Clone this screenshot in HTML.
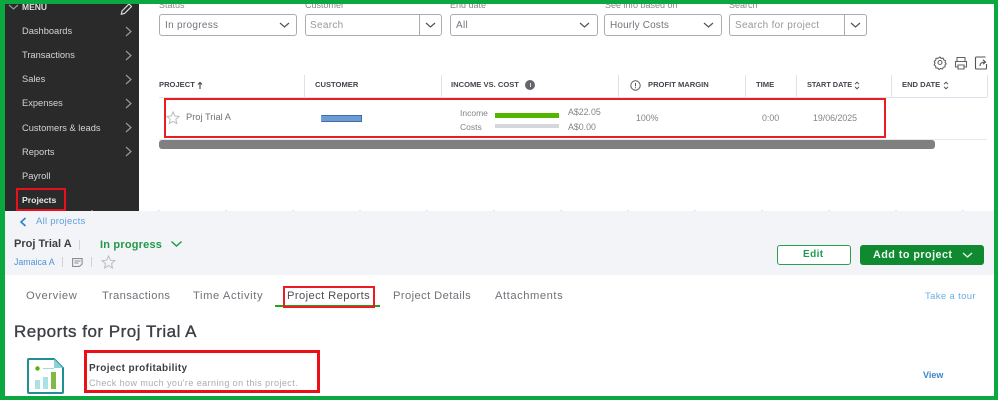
<!DOCTYPE html>
<html><head><meta charset="utf-8"><style>
html,body{margin:0;padding:0;background:#fff}
#p{position:relative;width:998px;height:400px;overflow:hidden;background:#fff;font-family:"Liberation Sans",sans-serif}
.b{position:absolute}
.t{position:absolute;white-space:nowrap;line-height:12px;filter:blur(.35px)}
.n{font-size:9.3px;color:#d4d4d4;left:22px}
.h{font-size:7.6px;font-weight:bold;color:#42464d}
.s{position:absolute;top:14px;height:20px;border:1px solid #a9acb0;border-radius:3px;background:#fff;box-sizing:content-box}
.f{font-size:10px;color:#72757b;top:20px;letter-spacing:.3px}
.l{font-size:9px;color:#85888c;top:-1px}
.tab{font-size:11.200px;color:#6f7277;top:290px;letter-spacing:.4px}
.sep{position:absolute;top:75px;width:1px;height:22px;background:#dde3ec}
svg{position:absolute;overflow:visible}
</style></head><body><div id="p">

<!-- sidebar -->
<div class="b" style="left:5px;top:4px;width:134px;height:207px;background:#2a2a2a"></div>
<svg style="left:0;top:0" width="140" height="211" fill="none" stroke="#9a9a9a" stroke-width="1.2">
<path d="M9 5l4.500 4 4.500-4"/>
<path d="M126 27l5 4.500-5 4.500M126 51l5 4.500-5 4.500M126 75l5 4.500-5 4.500M126 99l5 4.500-5 4.500M126 123l5 4.500-5 4.500M126 147l5 4.500-5 4.500"/>
<path d="M122 11l7-7 2.500 2.500-7 7-3.200.7z" stroke="#ddd"/>
</svg>
<div class="t" style="left:22px;top:1px;font-size:8.500px;font-weight:bold;color:#ddd">MENU</div>
<div class="t n" style="top:25px">Dashboards</div>
<div class="t n" style="top:49px">Transactions</div>
<div class="t n" style="top:73px">Sales</div>
<div class="t n" style="top:97px">Expenses</div>
<div class="t n" style="top:122px">Customers &amp; leads</div>
<div class="t n" style="top:146px">Reports</div>
<div class="t n" style="top:170px">Payroll</div>
<div class="t n" style="top:194px;font-size:8.700px;font-weight:bold;color:#e8e8e8">Projects</div>
<div class="b" style="left:16px;top:188px;width:50px;height:23px;box-sizing:border-box;border:2px solid #e8101c"></div>

<!-- filters -->
<div class="t l" style="left:159px">Status</div>
<div class="t l" style="left:305px">Customer</div>
<div class="t l" style="left:450px">End date</div>
<div class="t l" style="left:605px">See info based on</div>
<div class="t l" style="left:729px">Search</div>

<div class="s" style="left:159px;width:136px"></div>
<div class="s" style="left:305px;width:135px"></div>
<div class="b" style="left:419px;top:15px;width:1px;height:20px;background:#a9acb0"></div>
<div class="s" style="left:450px;width:146px"></div>
<div class="s" style="left:604px;width:116px"></div>
<div class="s" style="left:729px;width:136px"></div>
<div class="b" style="left:844px;top:15px;width:1px;height:20px;background:#a9acb0"></div>
<div class="t f" style="left:165px">In progress</div>
<div class="t f" style="left:310px;color:#96999d">Search</div>
<div class="t f" style="left:456px">All</div>
<div class="t f" style="left:610px;letter-spacing:.15px">Hourly Costs</div>
<div class="t f" style="left:735px;color:#96999d">Search for project</div>
<svg style="left:0;top:0" width="998" height="40" fill="none" stroke="#4f5358" stroke-width="1.2">
<path d="M280 23l4.500 4 4.500-4M426 23l4.500 4 4.500-4M580 23l4.500 4 4.500-4M704 23l4.500 4 4.500-4M851 23l4.500 4 4.500-4"/>
</svg>

<!-- toolbar icons -->
<svg style="left:933px;top:56px" width="56" height="14" fill="none" stroke="#5f6368" stroke-width="1.1">
<circle cx="7" cy="6.500" r="2"/>
<path d="M7 1l1.200 1.500 1.900-.4.600 1.800 1.800.7-.4 1.900 1.100 1.200-1.300 1.400.2 1.800-1.800.5-.9 1.600-1.800-.5-1.500 1-1.300-1.400-1.900-.1-.3-1.900L1.200 8.800 2 7 1.200 5.300l1.500-1.100.3-1.900 1.900 0z" stroke-linejoin="round"/>
<path d="M24 5V1.500h8V5M25 11h-2.500V5.500h11V11h-2.500M25 9h6v4h-6z"/>
<path d="M52.500 1h-9a1 1 0 0 0-1 1v10a1 1 0 0 0 1 1h9a1 1 0 0 0 1-1v-4M47 10c0-2.500 2-4 5-4M50 3.800l2.500 2.200-2.500 2.200" stroke="#4f5358"/>
</svg>

<!-- table header -->
<div class="sep" style="left:304px"></div>
<div class="sep" style="left:441px"></div>
<div class="sep" style="left:618px"></div>
<div class="sep" style="left:745px"></div>
<div class="sep" style="left:796px"></div>
<div class="sep" style="left:891px"></div>
<div class="sep" style="left:987px"></div>
<div class="b" style="left:159px;top:97px;width:828px;height:1px;background:#dde3ec"></div>
<div class="t h" style="left:159px;top:79px">PROJECT</div>
<svg style="left:196px;top:81px" width="8" height="9" fill="none" stroke="#4a4e55" stroke-width="1.200"><path d="M4 8V1.500M2 3.500l2-2 2 2"/></svg>
<div class="t h" style="left:315px;top:79px">CUSTOMER</div>
<div class="t h" style="left:451px;top:79px">INCOME VS. COST</div>
<div class="b" style="left:525px;top:80px;width:10px;height:10px;border-radius:50%;background:#63666b"></div>
<div class="b" style="left:529.500px;top:83px;width:1px;height:4px;background:#ddd"></div>
<svg style="left:630px;top:80px" width="11" height="11" fill="none" stroke="#55585d" stroke-width="1"><circle cx="5.500" cy="5.500" r="4.700"/><path d="M5.500 3v3.200M5.500 7.300v1"/></svg>
<div class="t h" style="left:648px;top:79px">PROFIT MARGIN</div>
<div class="t h" style="left:756px;top:79px">TIME</div>
<div class="t h" style="left:807px;top:79px;font-size:7.300px">START DATE</div>
<div class="t h" style="left:902px;top:79px">END DATE</div>
<svg style="left:855px;top:81px" width="100" height="9" fill="none" stroke="#4a4e55" stroke-width="1"><path d="M0 3.200l2-2 2 2M0 5.800l2 2 2-2M89 3.200l2-2 2 2M89 5.800l2 2 2-2"/></svg>

<!-- row -->
<div class="b" style="left:159px;top:139px;width:828px;height:1px;background:#e6e8ec"></div>
<svg style="left:166px;top:111px" width="14" height="14" fill="#fff" stroke="#b9bcc0" stroke-width="1"><path d="M7 1l1.800 4 4.300.4-3.300 2.900 1 4.300L7 10.300 3.200 12.600l1-4.300L.9 5.400l4.300-.4z"/></svg>
<div class="t" style="left:186px;top:111px;font-size:9.300px;color:#6f7276">Proj Trial A</div>
<div class="b" style="left:321px;top:115px;width:41px;height:7px;box-sizing:border-box;background:#6d9bd3;border:1px solid #3f6ea6;border-left-color:#7aa3d8"></div>
<div class="t" style="left:460px;top:106.500px;font-size:8.500px;color:#808388">Income</div>
<div class="t" style="left:460px;top:121px;font-size:8.500px;color:#808388">Costs</div>
<div class="b" style="left:495px;top:113px;width:64px;height:5px;background:#53b700"></div>
<div class="b" style="left:495px;top:124px;width:64px;height:4px;background:#d4d7dc"></div>
<div class="t" style="left:568px;top:106px;font-size:8.800px;color:#808388">A$22.05</div>
<div class="t" style="left:568px;top:120.500px;font-size:8.800px;color:#808388">A$0.00</div>
<div class="t" style="left:636px;top:112px;font-size:8.800px;color:#808388">100%</div>
<div class="t" style="left:762px;top:112px;font-size:8.800px;color:#808388">0:00</div>
<div class="t" style="left:813px;top:112px;font-size:8.800px;color:#808388">19/06/2025</div>
<div class="b" style="left:164px;top:98px;width:722px;height:40px;box-sizing:border-box;border:2px solid #ec1c24"></div>
<div class="b" style="left:159px;top:140px;width:776px;height:9px;background:#808080;border-radius:3px"></div>

<!-- tick marks -->
<svg style="left:0;top:210px" width="998" height="2" stroke="#c9ccd1" stroke-width="1"><path d="M92 0v1M159 0v1M226 0v1M293 0v1M360 0v1M427 0v1M494 0v1M561 0v1M628 0v1M695 0v1M762 0v1M829 0v1M896 0v1M963 0v1"/></svg>

<!-- project header -->
<div class="b" style="left:5px;top:211px;width:989px;height:64px;background:#f3f4f7"></div>
<svg style="left:19px;top:217px" width="9" height="10" fill="none" stroke="#2b7fd0" stroke-width="1.600"><path d="M6.500 1L2 5l4.500 4"/></svg>
<div class="t" style="left:36px;top:216px;font-size:9.500px;color:#5f9fdc;letter-spacing:.25px">All projects</div>
<div class="t" style="left:14px;top:238px;font-size:11px;font-weight:bold;color:#3a3d42">Proj Trial A</div>
<div class="b" style="left:79px;top:240px;width:1px;height:10px;background:#cfd2d6"></div>
<div class="t" style="left:100px;top:239px;font-size:11px;font-weight:bold;color:#1f9a45;letter-spacing:.2px">In progress</div>
<svg style="left:170px;top:240px" width="13" height="8" fill="none" stroke="#1f9a45" stroke-width="1.400"><path d="M1.500 1.500L6.500 6l5-4.500"/></svg>
<div class="t" style="left:14px;top:256px;font-size:8.800px;color:#4c93d6">Jamaica A</div>
<div class="b" style="left:62px;top:257px;width:1px;height:10px;background:#cfd2d6"></div>
<div class="b" style="left:91px;top:257px;width:1px;height:10px;background:#cfd2d6"></div>
<svg style="left:72px;top:258px" width="11" height="9" fill="none" stroke="#8b8e93" stroke-width="1.100"><path d="M.6.600h9.500v5.500L7.500 8.400H.6zM2.500 3h6M2.500 5h4"/></svg>
<svg style="left:101px;top:255px" width="15" height="14" fill="none" stroke="#b9bcc0" stroke-width="1"><path d="M7.500 1l1.900 4.200 4.500.4-3.400 3 1 4.400-4-2.400-4 2.400 1-4.400-3.400-3 4.500-.4z"/></svg>
<div class="b" style="left:777px;top:245px;width:74px;height:20px;box-sizing:border-box;border:1.500px solid #2c9c50;border-radius:3px;background:#fff"></div>
<div class="t" style="left:803px;top:249px;font-size:10px;font-weight:bold;color:#1f9a50;letter-spacing:.4px">Edit</div>
<div class="b" style="left:860px;top:245px;width:124px;height:20px;background:#0f8a30;border-radius:3px"></div>
<div class="t" style="left:873px;top:249px;font-size:10.800px;font-weight:bold;color:#eef7f0;letter-spacing:.45px">Add to project</div>
<svg style="left:962px;top:252px" width="11" height="7" fill="none" stroke="#eef7f0" stroke-width="1.300"><path d="M1 1l4.500 4L10 1"/></svg>

<!-- tabs -->
<div class="t tab" style="left:26px;letter-spacing:.6px">Overview</div>
<div class="t tab" style="left:102px">Transactions</div>
<div class="t tab" style="left:193px;letter-spacing:.6px">Time Activity</div>
<div class="t tab" style="left:287px;color:#4b4e53">Project Reports</div>
<div class="t tab" style="left:393px">Project Details</div>
<div class="t tab" style="left:495px;letter-spacing:.55px">Attachments</div>
<div class="b" style="left:275px;top:305px;width:105px;height:2px;background:#2ca01c"></div>
<div class="b" style="left:283px;top:286px;width:92px;height:22px;box-sizing:border-box;border:2px solid #ec1c24"></div>
<div class="t" style="left:925px;top:291px;font-size:9.500px;color:#6aaee3;letter-spacing:.35px">Take a tour</div>

<!-- reports -->
<div class="t" style="left:14px;top:326px;font-size:17px;color:#3c3f44;letter-spacing:.5px;-webkit-text-stroke:.35px #3c3f44">Reports for Proj Trial A</div>
<svg style="left:27px;top:358px" width="37" height="36">
<path d="M1 2a1 1 0 0 1 1-1h25l9 9v24a1 1 0 0 1-1 1H2a1 1 0 0 1-1-1z" fill="#fff" stroke="#1f8f93" stroke-width="2"/>
<path d="M27 1v9h9z" fill="#8fd2d6"/>
<circle cx="10.500" cy="10.500" r="2.200" fill="#53b700"/>
<path d="M16 10.500h11" stroke="#9fd9dc" stroke-width="1"/>
<rect x="8" y="22" width="5" height="9" fill="#a9e2e6"/>
<rect x="16" y="19" width="5" height="12" fill="#a9e2e6"/>
<rect x="24" y="14" width="5" height="17" fill="#7dbb45"/>
</svg>
<div class="t" style="left:89px;top:363px;font-size:10px;font-weight:bold;color:#3c3f44;letter-spacing:.35px">Project profitability</div>
<div class="t" style="left:89px;top:377px;font-size:9px;color:#a9acb0;letter-spacing:.43px">Check how much you're earning on this project.</div>
<div class="b" style="left:84px;top:349.500px;width:236px;height:43px;box-sizing:border-box;border:3px solid #ec0f18"></div>
<div class="t" style="left:923px;top:369px;font-size:9px;font-weight:bold;color:#3a86c8">View</div>

<!-- green frame -->
<div class="b" style="left:0;top:0;width:998px;height:4px;background:#0aa83f"></div>
<div class="b" style="left:0;top:396px;width:998px;height:4px;background:#0aa83f"></div>
<div class="b" style="left:0;top:0;width:5px;height:400px;background:#0aa83f"></div>
<div class="b" style="left:994px;top:0;width:4px;height:400px;background:#0aa83f"></div>
</div></body></html>
